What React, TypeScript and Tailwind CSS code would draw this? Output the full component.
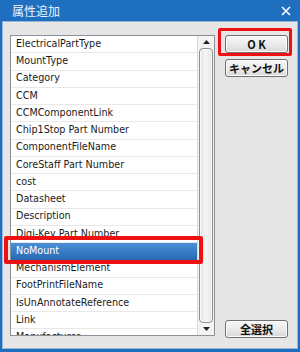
const items = [
  'ElectricalPartType',
  'MountType',
  'Category',
  'CCM',
  'CCMComponentLink',
  'Chip1Stop Part Number',
  'ComponentFileName',
  'CoreStaff Part Number',
  'cost',
  'Datasheet',
  'Description',
  'Digi-Key Part Number',
  'NoMount',
  'MechanismElement',
  'FootPrintFileName',
  'IsUnAnnotateReference',
  'Link',
  'Manufacturer',
]

const jp = { fontFamily: '"Noto Sans CJK JP", sans-serif' }

function Button({ label }: { label: string }) {
  return (
    <button
      className="flex h-[18px] w-[63px] items-center justify-center rounded-[3px] border border-[#707070] bg-gradient-to-b from-[#f7f7f7] via-[#ebebeb] to-[#d9d9d9] text-[11px] font-bold leading-none text-[#111] shadow-[inset_0_0_0_1px_#fcfcfc]"
      style={jp}
    >
      {label}
    </button>
  )
}

export default function App() {
  return (
    <div className="relative flex h-[352px] w-[300px] flex-col bg-[#1f6fc1] px-[2px] pb-[3px]">
      {/* title bar */}
      <div className="flex h-[21px] items-center justify-between pl-[10px] pr-[6px]">
        <span className="text-[12px] leading-none text-[#eef4fb]" style={jp}>
          属性追加
        </span>
        <svg width="10" height="10" viewBox="0 0 10 10" className="mr-[1px]">
          <path d="M1 1 L9 9 M9 1 L1 9" stroke="#fff" strokeWidth="1.6" />
        </svg>
      </div>

      {/* body */}
      <div className="flex flex-1 gap-[10px] border border-[#9ab6d6] bg-[#e6e6e6] pl-[7px] pt-[13px]">
        {/* list box */}
        <div className="flex h-[301px] w-[205px] border border-[#8d9096] bg-white">
          <div className="flex-1 overflow-hidden">
            {items.map((it) => {
              const sel = it === 'NoMount'
              return (
                <div
                  key={it}
                  className={`box-border flex h-[17.25px] items-center border-b pl-[5px] text-[9.6px] ${
                    sel
                      ? 'border-[#2a68ad] bg-gradient-to-b from-[#4a90d6] to-[#2a6bb5] text-white'
                      : 'border-[#e8e8e8] text-[#1a1a1a]'
                  }`}
                  style={{ fontFamily: '"DejaVu Sans", sans-serif' }}
                >
                  {it}
                </div>
              )
            })}
          </div>
          {/* scrollbar */}
          <div className="flex w-[17px] flex-col border-l border-[#d8d8d8] bg-[#f4f4f4]">
            <div className="flex h-[12px] items-center justify-center">
              <svg width="7" height="4" viewBox="0 0 7 4">
                <path d="M0 4 L3.5 0 L7 4 Z" fill="#222" />
              </svg>
            </div>
            <div className="mx-[1px] flex-1 rounded-[4px] border border-[#8e8e8e] bg-gradient-to-r from-[#e4e4e4] via-[#f6f6f6] to-[#e4e4e4] shadow-[inset_0_0_0_1px_#fafafa]" />
            <div className="flex h-[12px] items-center justify-center">
              <svg width="7" height="4" viewBox="0 0 7 4">
                <path d="M0 0 L3.5 4 L7 0 Z" fill="#222" />
              </svg>
            </div>
          </div>
        </div>

        {/* buttons */}
        <div className="flex h-[301px] flex-col">
          <div className="flex flex-col gap-[6px]">
            <Button label="O K" />
            <Button label="キャンセル" />
          </div>
          <div className="mt-auto mb-[-2px]">
            <Button label="全選択" />
          </div>
        </div>
      </div>

      {/* red annotation boxes */}
      <div className="pointer-events-none absolute left-[218px] top-[28px] h-[28px] w-[74px] rounded-[2px] border-[3px] border-[#ee1111]" />
      <div className="pointer-events-none absolute left-[4px] top-[236px] h-[28px] w-[199px] rounded-[2px] border-[4px] border-[#ee1111]" />
    </div>
  )
}
